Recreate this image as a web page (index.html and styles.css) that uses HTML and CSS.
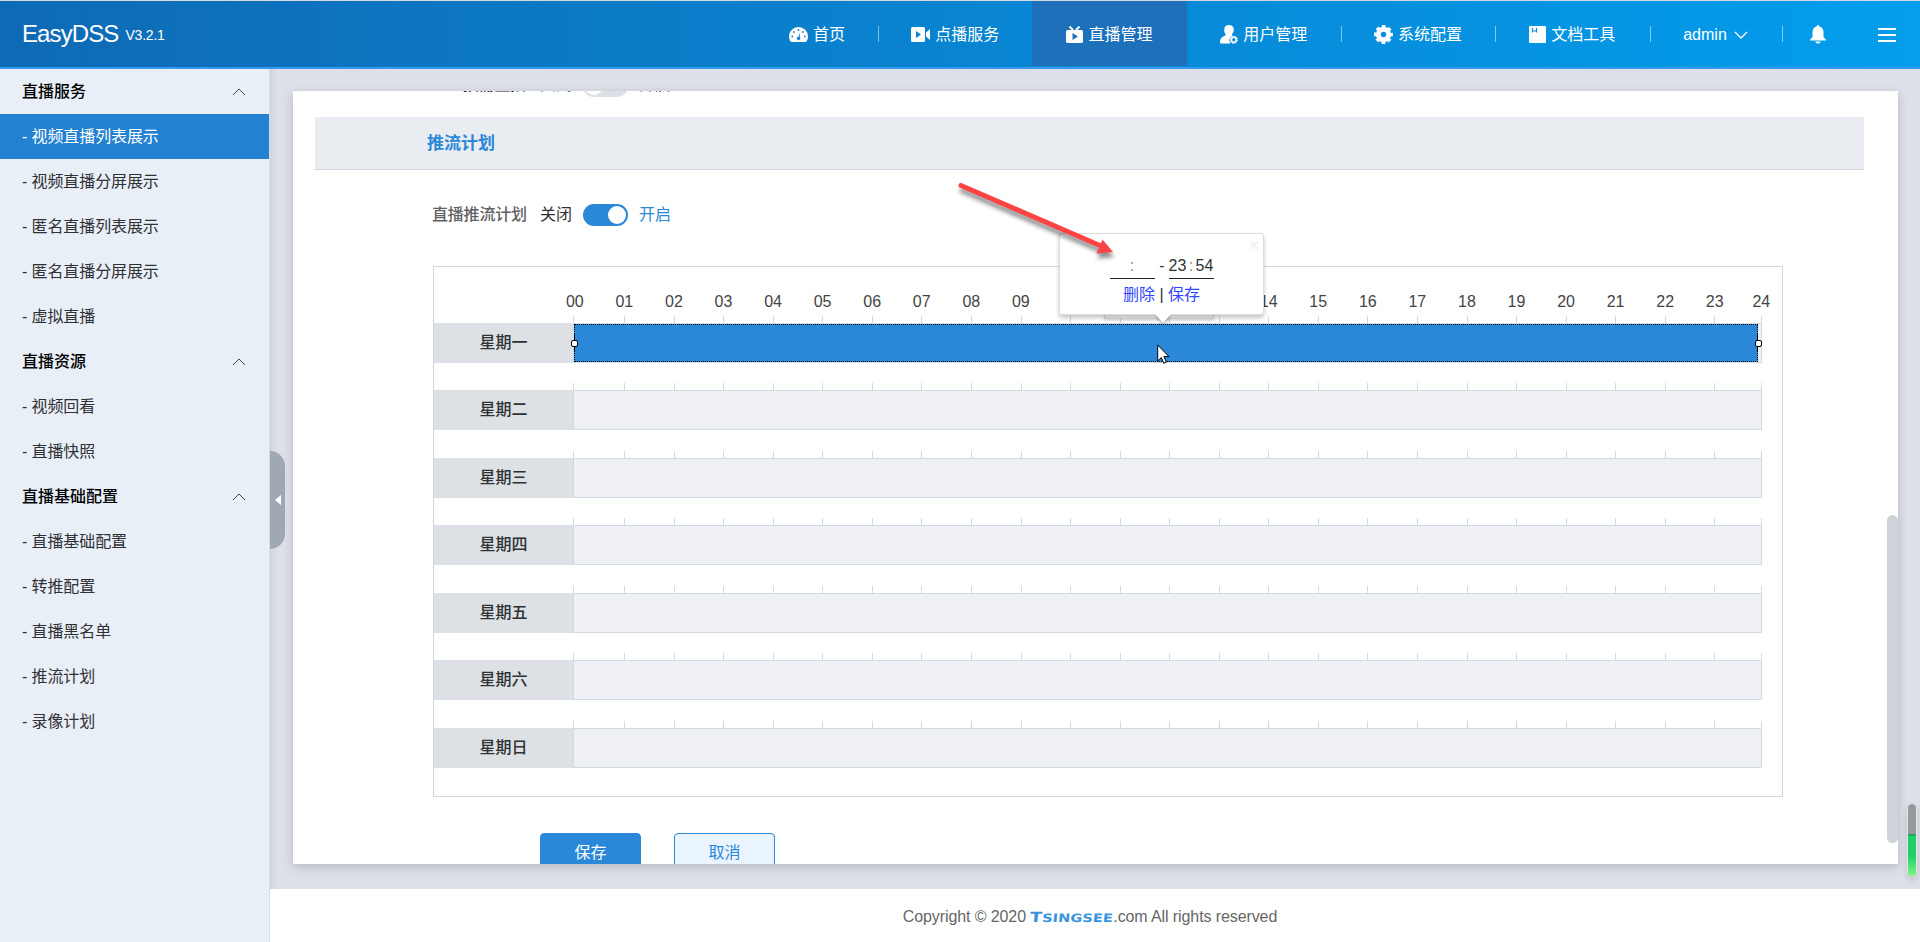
FILE: index.html
```html
<!DOCTYPE html>
<html lang="zh-CN">
<head>
<meta charset="utf-8">
<title>EasyDSS</title>
<link rel="stylesheet" href="styles.css">
</head>
<body>
<header class="header">
  <div class="brand"><span class="brand-name">EasyDSS</span><span class="brand-version">V3.2.1</span></div>
  <nav class="nav">
    <a class="nav-item nav-home"><svg class="icon" width="19" height="15" viewBox="0 0 19 15"><path fill="#fff" d="M2 15C.7 13.500 0 11.700 0 9.500a9.500 9.500 0 0 1 19 0c0 2.200-.7 4-2 5.500z"/><g fill="#1580ce"><circle cx="3.300" cy="9.500" r=".9"/><circle cx="5" cy="5" r=".9"/><circle cx="9.500" cy="3" r=".9"/><circle cx="14" cy="5" r=".9"/><circle cx="15.700" cy="9.500" r=".9"/><path d="M11.300 4.800 10.600 10a1.700 1.700 0 1 1-1.200-.3z"/></g></svg>首页</a>
    <a class="nav-item"><svg class="icon" width="19" height="15" viewBox="0 0 19 15"><rect width="14" height="15" rx="1.500" fill="#fff"/><path fill="#0883d2" d="M5 4l5 3.500L5 11z"/><path fill="#fff" d="M15 5.500l4-3.500v11l-4-3.500z"/></svg>点播服务</a>
    <a class="nav-item active"><svg class="icon" width="17" height="17" viewBox="0 0 17 17"><path fill="#fff" d="M1.500 4h14A1.500 1.500 0 0 1 17 5.500v10a1.500 1.500 0 0 1-1.500 1.500h-14A1.500 1.500 0 0 1 0 15.500v-10A1.500 1.500 0 0 1 1.500 4z"/><path d="M3.500.5 7 4M13.500.5 10 4" stroke="#fff" stroke-width="2"/><path fill="#1e70bb" d="M6.500 7l5.500 3.500L6.500 14z"/></svg>直播管理</a>
    <a class="nav-item"><svg class="icon" width="18" height="19" viewBox="0 0 18 19"><path fill="#fff" d="M9 0c3 0 4.800 2 4.800 4.800 0 2-.9 3.300-1.800 4.500v1.200l1 .5a4.500 4.500 0 0 0-2.500 7.500H1.500C.5 18.500 0 18 0 17c.3-3.500 1.500-5 5.500-6.500V9.300C4.600 8.100 4.200 6.800 4.200 4.800 4.200 2 6 0 9 0z"/><circle cx="13.800" cy="14.800" r="2.500" fill="none" stroke="#fff" stroke-width="1.600"/><circle cx="13.800" cy="14.800" r="3.700" fill="none" stroke="#fff" stroke-width="1" stroke-dasharray="1.450 1.450"/></svg>用户管理</a>
    <a class="nav-item"><svg class="icon" width="19" height="19" viewBox="-9.500 -9.500 19 19"><circle r="5.200" fill="none" stroke="#fff" stroke-width="5"/><circle r="8.100" fill="none" stroke="#fff" stroke-width="2.600" stroke-dasharray="3.680 2.680" stroke-dashoffset="1.840"/></svg>系统配置</a>
    <a class="nav-item"><svg class="icon" width="17" height="17" viewBox="0 0 17 17"><path fill="#fff" d="M1 0h15a1 1 0 0 1 1 1v15a1 1 0 0 1-1 1H1a1 1 0 0 1-1-1V1a1 1 0 0 1 1-1z"/><path d="M3.500 2v4.500M7.500 2v4.500M3.500 5h4" stroke="#0991df" stroke-width="1.200" fill="none"/></svg>文档工具</a>
    <a class="nav-item nav-user">admin<svg class="caret" width="14" height="8" viewBox="0 0 14 8"><path d="M1 1l6 6 6-6" fill="none" stroke="#fff" stroke-width="1.300"/></svg></a>
    <a class="nav-item nav-bell"><svg width="16" height="19" viewBox="0 0 16 19"><path fill="#fff" d="M8 0a1.500 1.500 0 0 1 1.500 1.500C12.500 2.300 13.500 4.500 13.500 7.500V12L16 14.800V15.500H0v-.7L2.500 12V7.500c0-3 1-5.200 4-6A1.500 1.500 0 0 1 8 0zM5.300 16.500h5.400a2.700 2 0 0 1-5.400 0z"/></svg></a>
    <a class="nav-item nav-menu"><svg width="18" height="14" viewBox="0 0 18 14"><path d="M0 1h18M0 7h18M0 13h18" stroke="#fff" stroke-width="2"/></svg></a>
  </nav>
</header>
<div class="layout">
  <aside class="sidebar">
    <div class="group">直播服务<svg width="14" height="8" viewBox="0 0 14 8"><path d="M1 7l6-6 6 6"/></svg></div>
    <a class="side-item current">- 视频直播列表展示</a>
    <a class="side-item">- 视频直播分屏展示</a>
    <a class="side-item">- 匿名直播列表展示</a>
    <a class="side-item">- 匿名直播分屏展示</a>
    <a class="side-item">- 虚拟直播</a>
    <div class="group">直播资源<svg width="14" height="8" viewBox="0 0 14 8"><path d="M1 7l6-6 6 6"/></svg></div>
    <a class="side-item">- 视频回看</a>
    <a class="side-item">- 直播快照</a>
    <div class="group">直播基础配置<svg width="14" height="8" viewBox="0 0 14 8"><path d="M1 7l6-6 6 6"/></svg></div>
    <a class="side-item">- 直播基础配置</a>
    <a class="side-item">- 转推配置</a>
    <a class="side-item">- 直播黑名单</a>
    <a class="side-item">- 推流计划</a>
    <a class="side-item">- 录像计划</a>
  </aside>
  <div class="content">
    <div class="collapse"><svg width="6" height="10" viewBox="0 0 6 10"><path d="M6 0v10L0 5z" fill="#fff"/></svg></div>
    <main class="stage">
      <div class="card">
        <div class="form-row clipped"><span class="form-label">按需直播</span><span class="opt on">关闭</span><span class="switch off"></span><span class="opt">开启</span></div>
        <h2 class="section-title">推流计划</h2>
        <div class="form-row"><span class="form-label">直播推流计划</span><span class="opt">关闭</span><span class="switch"></span><span class="opt on">开启</span></div>
        <div class="plan" id="plan"></div>
        <div class="actions"><button class="btn primary">保存</button><button class="btn">取消</button></div>
        <div class="scroll-thumb"></div>
      </div>
    </main>
    <footer class="footer">Copyright © 2020 <span class="logo"><span class="logo-text"><span class="logo-t">T</span>SINGSEE</span></span>.com All rights reserved</footer>
  </div>
</div>
<div class="tip-under"></div>
<div class="popup">
  <svg class="close" width="10" height="10" viewBox="0 0 10 10"><path d="M1 1l8 8M9 1l-8 8" stroke="#f1f1f1" stroke-width="2"/></svg>
  <div class="times"><span class="time"><i></i><b>:</b><i></i></span><span class="dash">-</span><span class="time"><i>23</i><b>:</b><i>54</i></span></div>
  <div class="links"><a>删除</a> | <a>保存</a></div>
  <svg class="popup-arrow" width="16" height="10" viewBox="0 0 16 10"><path d="M0 0h16L8 9z" fill="#fff"/></svg>
</div>
<svg class="pointer-arrow" width="170" height="90" viewBox="0 0 170 90"><path d="M6 5.500 L146 66" stroke="#fd4343" stroke-width="5" stroke-linecap="round"/><path d="M147.500 59.500 158 72 141.500 73.500z" fill="#fd4343"/></svg>
<svg class="cursor" width="13" height="20" viewBox="0 0 13 20"><path d="M.7 1v16l3.600-3.400 2.500 5.700 2.600-1.100L6.900 12.600h5z" fill="#fff" stroke="#000"/></svg>
<div class="gauge"><div class="gauge-fill"></div></div>
<script src="plan.js"></script>
</body>
</html>
```
FILE: styles.css
```css
* { box-sizing: border-box; }
body {
  margin: 0;
  height: 942px;
  overflow: hidden;
  font: 16px/20px "Liberation Sans", "Noto Sans CJK SC", sans-serif;
  color: #303133;
  background: #fff;
}
.header {
  display: flex;
  justify-content: space-between;
  height: 69px;
  border-top: 1px solid #d4dbe0;
  border-bottom: 2px solid #3399f3;
  background: linear-gradient(to right, #0f6ab5, #039eed);
  color: #fff;
}
.brand { display: flex; align-items: baseline; padding: 19px 0 0 22px; }
.brand-name { font-size: 24px; line-height: 28px; letter-spacing: -.9px; }
.brand-version { font-size: 14px; margin-left: 7px; letter-spacing: -.2px; transform: translateY(-2px); }
.nav { display: flex; }
.nav-item {
  position: relative;
  width: 154.300px;
  height: 65px;
  display: flex;
  align-items: center;
  justify-content: center;
  padding-top: 2px;
}
.nav-item + .nav-item:not(.active)::before {
  content: "";
  position: absolute;
  left: 0;
  top: 25px;
  width: 1px;
  height: 16px;
  background: rgba(255,255,255,.5);
}
.nav-item.active { background: #1e70bb; }
.nav-item.active + .nav-item::before, .nav-item.nav-menu::before { display: none; }
.icon { margin-right: 5px; flex: none; }
.nav-home { width: 122px; }
.nav-user { width: 132px; }
.nav-bell { width: 72.500px; }
.nav-item.nav-bell + .nav-menu::before { display: none; }
.nav-menu { width: 66px; }
.caret { margin-left: 7px; }
.layout { display: flex; height: 873px; }
.sidebar { width: 270px; background: #e8eff7; border-right: 1px solid #d9dde3; }
.group, .side-item { display: flex; height: 45px; align-items: center; padding: 0 23px 0 22px; }
.side-item { letter-spacing: -.1px; }
.group { justify-content: space-between; font-weight: 500; color: #000; }
.group path { fill: none; stroke: #444; stroke-width: 1; }
.current { background: #2381d2; color: #fff; }
.content { position: relative; flex: 1; display: flex; flex-direction: column; }
.collapse {
  position: absolute;
  left: 0;
  top: 382px;
  width: 15px;
  height: 98px;
  border-radius: 0 15px 15px 0;
  background: #9fa9b5;
  display: flex;
  align-items: center;
  justify-content: center;
}
.stage {
  height: 820px;
  padding: 22px 22px 25px 23px;
  overflow: hidden;
  background: linear-gradient(to right, #d3d5dc, #dde0e8 8px);
}
.card {
  position: relative;
  height: 773px;
  padding: 0 34px 0 22px;
  overflow: hidden;
  background: #fff;
  box-shadow: 0 3px 10px rgba(0,0,0,.18);
}
.form-row { display: flex; align-items: center; height: 22px; margin: 34px 0 0 117px; }
.form-label { width: 94px; margin-right: 14px; text-align: right; font-weight: 500; letter-spacing: -.2px; color: #606266; white-space: nowrap; }
.form-row.clipped { margin-top: -16px; }
.clipped .form-label { color: #303133; }
.clipped .form-label, .clipped .opt { padding-bottom: 3px; }
.opt.on { color: #2b88d8; }
.switch { width: 45px; height: 22px; margin: 0 11px; border-radius: 11px; background: #2b88d8; padding: 2px; }
.switch::after { content: ""; display: block; width: 18px; height: 18px; margin-left: 23px; border-radius: 50%; background: #fff; }
.switch.off { background: #dcdfe6; }
.switch.off::after { margin-left: 0; }
.section-title {
  height: 53px;
  margin: 20px 0 0;
  padding-left: 112px;
  font-size: 17px;
  line-height: 54px;
  color: #2b88d8;
  background: #e9ecf1;
  border-bottom: 1px solid #cdd6de;
}
.plan { width: 1350px; height: 531px; margin: 40px 0 0 118px; border: 1px solid #d1d9df; padding-top: 25px; }
.hours { display: flex; height: 23px; padding-left: 116px; color: #444; }
.hour { flex: none; width: 49.570px; text-align: center; font-size: 16px; line-height: 20px; }
.hour:last-child { margin-left: -3px; }
.day { display: flex; align-items: flex-end; height: 47.500px; margin-bottom: 20px; }
.day-name { width: 139px; height: 40px; background: #dde0e5; text-align: center; line-height: 40px; font-weight: 500; }
.track { width: 1189px; }
.ticks { display: flex; height: 7px; border-left: 1px solid #d1dae1; }
.tick { flex: none; width: 49.570px; border-right: 1px solid #d1dae1; }
.tick:first-child { width: 51px; }
.tick:last-child { flex: 1; }
.bar { height: 40px; border: 1px solid #d1dae1; background: #eef0f4; }
.fill { position: relative; width: 1184px; height: 38px; background: #2b88d8; border: 1px dotted #000; }
.handle { position: absolute; top: 9px; width: 1px; height: 18px; background: #000; }
.handle::after { content: ""; position: absolute; left: -2px; top: 6px; width: 5px; height: 5px; border: 1px solid #000; border-radius: 2px; background: #fff; }
.handle.start { left: -1px; }
.handle.start::after { left: -3px; }
.handle.end { right: -1px; }
.actions { display: flex; gap: 33px; margin: 36px 0 0 225px; }
.btn {
  width: 101px;
  height: 40px;
  padding: 0;
  border: 1px solid #2b88d8;
  border-radius: 4px;
  background: #e9f4fe;
  color: #2b88d8;
  font: inherit;
}
.btn.primary { background: #2b88d8; color: #fff; }
.scroll-thumb { position: absolute; right: 0; top: 424px; width: 11px; height: 328px; border-radius: 5.500px; background: #ced3d8; }
.footer { flex: 1; text-align: center; padding: 18px 10px 0 0; color: #666; letter-spacing: -.1px; background: #fff; }
.logo { display: inline-block; width: 83px; text-align: left; white-space: nowrap; }
.logo-text {
  display: inline-block;
  transform: scaleX(1.27) skewX(-4deg);
  transform-origin: left;
  font: bold 11.500px/16px "DejaVu Sans", sans-serif;
  letter-spacing: 0;
  color: #3a95df;
}
.logo-t { font-size: 14px; }
.popup {
  position: absolute;
  left: 1059px;
  top: 233px;
  width: 205px;
  height: 82px;
  border: 1px solid #dcdcdc;
  border-radius: 3px;
  background: #fff;
  box-shadow: 0 3px 4px rgba(0,0,0,.22);
  text-align: center;
}
.close { position: absolute; right: 4px; top: 6px; }
.times { display: flex; justify-content: center; margin-top: 22px; height: 23px; }
.time { display: flex; width: 45px; border-bottom: 1px solid #222; }
.time i { width: 18px; font-style: normal; }
.time b { width: 9px; font-weight: 400; color: #888; }
.dash { width: 14px; padding-left: 1px; }
.links { margin-top: 6px; }
.links a { color: #3346ff; }
.popup-arrow { position: absolute; left: 95px; top: 80px; filter: drop-shadow(0 2px 1px rgba(0,0,0,.25)); }
.tip-under { position: absolute; left: 1104px; top: 300px; width: 110px; height: 19px; background: #f4f4f4; border: 1px solid #d5d5d5; box-shadow: 0 2px 3px rgba(0,0,0,.12); }
.pointer-arrow { position: absolute; left: 955px; top: 180px; filter: drop-shadow(1px 5px 2px rgba(0,0,0,.45)); }
.cursor { position: absolute; left: 1157px; top: 344px; }
.gauge {
  position: absolute;
  left: 1907px;
  top: 803px;
  width: 10px;
  height: 74px;
  border: 1px solid #e6e7ea;
  border-radius: 5px;
  background: #97999d;
  box-shadow: 0 3px 6px rgba(0,0,0,.15);
  overflow: hidden;
}
.gauge-fill { height: 42px; margin-top: 30px; border-top: 2px solid #1fab58; background: linear-gradient(#21ce6b 50%, #7df57f); }
```
FILE: plan.js
```js
const plan = document.getElementById('plan');
const hours = Array.from({ length: 25 }, (_, h) => `<span class="hour">${String(h).padStart(2, '0')}</span>`).join('');
const ticks = '<span class="tick"></span>'.repeat(24);
const fill = '<div class="fill"><span class="handle start"></span><span class="handle end"></span></div>';
const days = ['一', '二', '三', '四', '五', '六', '日'].map((d, i) =>
  `<div class="day"><div class="day-name">星期${d}</div><div class="track"><div class="ticks">${ticks}</div><div class="bar">${i === 0 ? fill : ''}</div></div></div>`
).join('');
plan.innerHTML = `<div class="hours">${hours}</div>${days}`;
```
